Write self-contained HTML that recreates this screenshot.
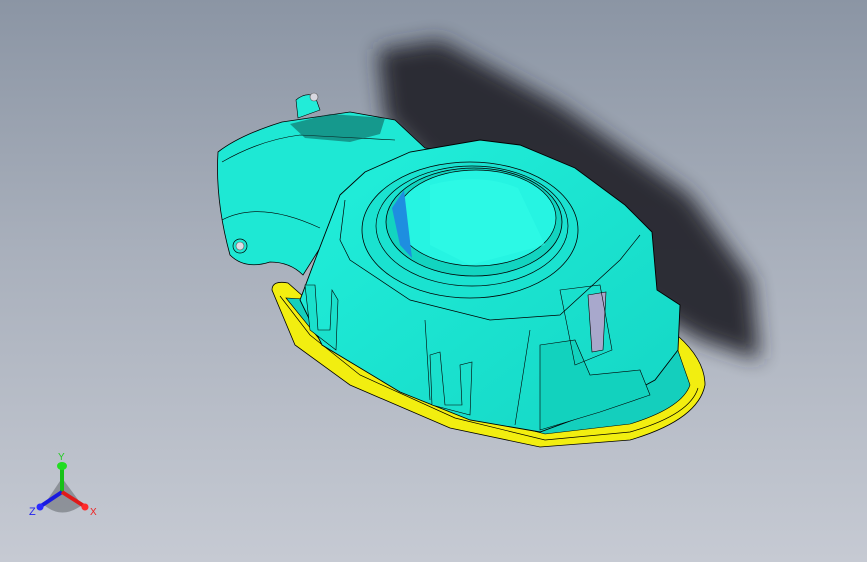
<!DOCTYPE html>
<html><head><style>html,body{margin:0;padding:0;width:867px;height:562px;overflow:hidden}
body{background:linear-gradient(180deg,#8b95a4 0%,#a9b0bc 45%,#c6cad3 100%)}</style></head>
<body>
<svg width="867" height="562" viewBox="0 0 867 562" xmlns="http://www.w3.org/2000/svg" style="position:absolute;left:0;top:0">
<defs>
<filter id="b" x="-30%" y="-30%" width="160%" height="160%"><feGaussianBlur stdDeviation="10"/></filter>
<linearGradient id="cy" x1="0" y1="0" x2="1" y2="1"><stop offset="0" stop-color="#22f0dc"/><stop offset="1" stop-color="#14d6c4"/></linearGradient>
</defs>
<path d="M378,50 L440,40 L560,105 L690,195 L752,280 L760,360 L700,340 L580,270 L450,190 L385,120 Z" fill="#25282d" filter="url(#b)" opacity="0.95"/>
<!-- yellow flange -->
<path d="M272,290 Q272,280 288,283 L330,320 L480,395 L620,400 L678,336 Q705,360 705,385 Q698,420 630,440 L540,447 L450,428 L350,385 L295,345 Z" fill="#f2ee10" stroke="#000" stroke-width="0.8"/>
<path d="M280,296 L310,335 L360,375 L455,418 L545,440 L630,432 Q690,415 698,388" fill="none" stroke="#000" stroke-width="0.7"/>
<path d="M286,298 L320,340 L370,370 L455,410 L545,434 L630,424 Q682,408 690,385 L676,345 L540,400 L400,350 L320,300 Z" fill="#14cfbd" stroke="#000" stroke-width="0.6"/>
<!-- left arm -->
<path d="M218,152 Q240,135 282,122 L350,112 L395,120 L425,148 L440,150 L345,195 L320,248 L303,275 Q290,262 270,262 Q245,270 230,255 Q215,200 218,152 Z" fill="#1ee8d4" stroke="#000" stroke-width="0.8"/>
<path d="M222,162 Q260,140 300,135 L395,140" fill="none" stroke="#000" stroke-width="0.6"/>
<path d="M222,220 Q260,200 320,228" fill="none" stroke="#000" stroke-width="0.6"/>
<path d="M296,100 Q305,92 315,96 L320,110 L298,118 Z" fill="#22ecd8" stroke="#000" stroke-width="0.6"/>
<circle cx="314" cy="97" r="4" fill="#d8d8e0" stroke="#555" stroke-width="0.6"/>
<path d="M290,124 L330,114 L385,118 L380,134 L350,142 L305,138 Z" fill="#0c4a46" opacity="0.5"/>
<circle cx="240" cy="246" r="7" fill="#1ee8d4" stroke="#000" stroke-width="0.7"/>
<circle cx="240" cy="246" r="4" fill="#dcdce4" stroke="#555" stroke-width="0.6"/>
<!-- main body -->
<path d="M340,195 L365,172 L410,152 L480,140 L520,145 L575,168 L625,205 L652,232 L657,290 L680,305 L678,350 L655,380 L600,410 L540,432 L470,420 L400,392 L322,345 L300,300 L315,260 Z" fill="url(#cy)" stroke="#000" stroke-width="0.9"/>
<path d="M345,200 L340,240 L350,260 L410,300 L490,320 L560,315 L620,260 L640,235" fill="none" stroke="#000" stroke-width="0.7"/>
<path d="M425,320 L430,400 M530,330 L515,425" fill="none" stroke="#000" stroke-width="0.6"/>
<path d="M540,345 L575,340 L590,375 L640,370 L650,395 L600,412 L540,430 Z" fill="#12d2be" stroke="#000" stroke-width="0.6"/>
<!-- ring -->
<ellipse cx="470" cy="230" rx="108" ry="68" fill="#1ae2d0" stroke="#000" stroke-width="0.8"/>
<ellipse cx="472" cy="226" rx="96" ry="60" fill="none" stroke="#000" stroke-width="0.7"/>
<ellipse cx="474" cy="222" rx="88" ry="54" fill="#12d4c0" stroke="#000" stroke-width="0.8"/>
<ellipse cx="476" cy="218" rx="80" ry="48" fill="#26f4e2" stroke="#000" stroke-width="0.7"/>
<path d="M392,208 L404,190 L412,258 L400,245 Z" fill="#1e8ee0"/>
<path d="M430,185 Q480,172 518,188 L545,245 L470,265 L430,245 Z" fill="#30fce8" opacity="0.6"/>
<!-- slider -->
<path d="M588,295 L606,292 L603,350 L592,352 Z" fill="#a8a8cc" stroke="#000" stroke-width="0.6"/>
<path d="M560,290 L600,285 L612,350 L575,365 Z" fill="none" stroke="#000" stroke-width="0.6"/>
<!-- clips -->
<path d="M430,355 L440,352 L445,405 L462,405 L460,365 L472,362 L470,415 L432,405 Z" fill="#1ae0cc" stroke="#000" stroke-width="0.6"/>
<path d="M305,285 L315,285 L318,330 L330,330 L332,290 L338,300 L336,350 L310,330 Z" fill="#1ae0cc" stroke="#000" stroke-width="0.6"/>
<!-- triad -->
<path d="M62,478 L44,505 Q62,520 82,505 Z" fill="#5a5d63" opacity="0.5"/>
<line x1="62" y1="492" x2="62" y2="467" stroke="#17c117" stroke-width="4"/>
<ellipse cx="62" cy="466" rx="5" ry="4" fill="#22dd22"/>
<line x1="62" y1="492" x2="41" y2="506" stroke="#1a1ae0" stroke-width="4"/>
<circle cx="40" cy="507" r="3.5" fill="#2a2aff"/>
<line x1="62" y1="492" x2="84" y2="506" stroke="#e01a1a" stroke-width="4"/>
<circle cx="85" cy="507" r="3.5" fill="#ff2a2a"/>
<text x="58" y="460" font-family="Liberation Sans, sans-serif" font-size="10" fill="#22cc22">Y</text>
<text x="29" y="515" font-family="Liberation Sans, sans-serif" font-size="11" fill="#2222ee">Z</text>
<text x="90" y="515" font-family="Liberation Sans, sans-serif" font-size="10" fill="#ee2222">X</text>
</svg>
</body></html>
